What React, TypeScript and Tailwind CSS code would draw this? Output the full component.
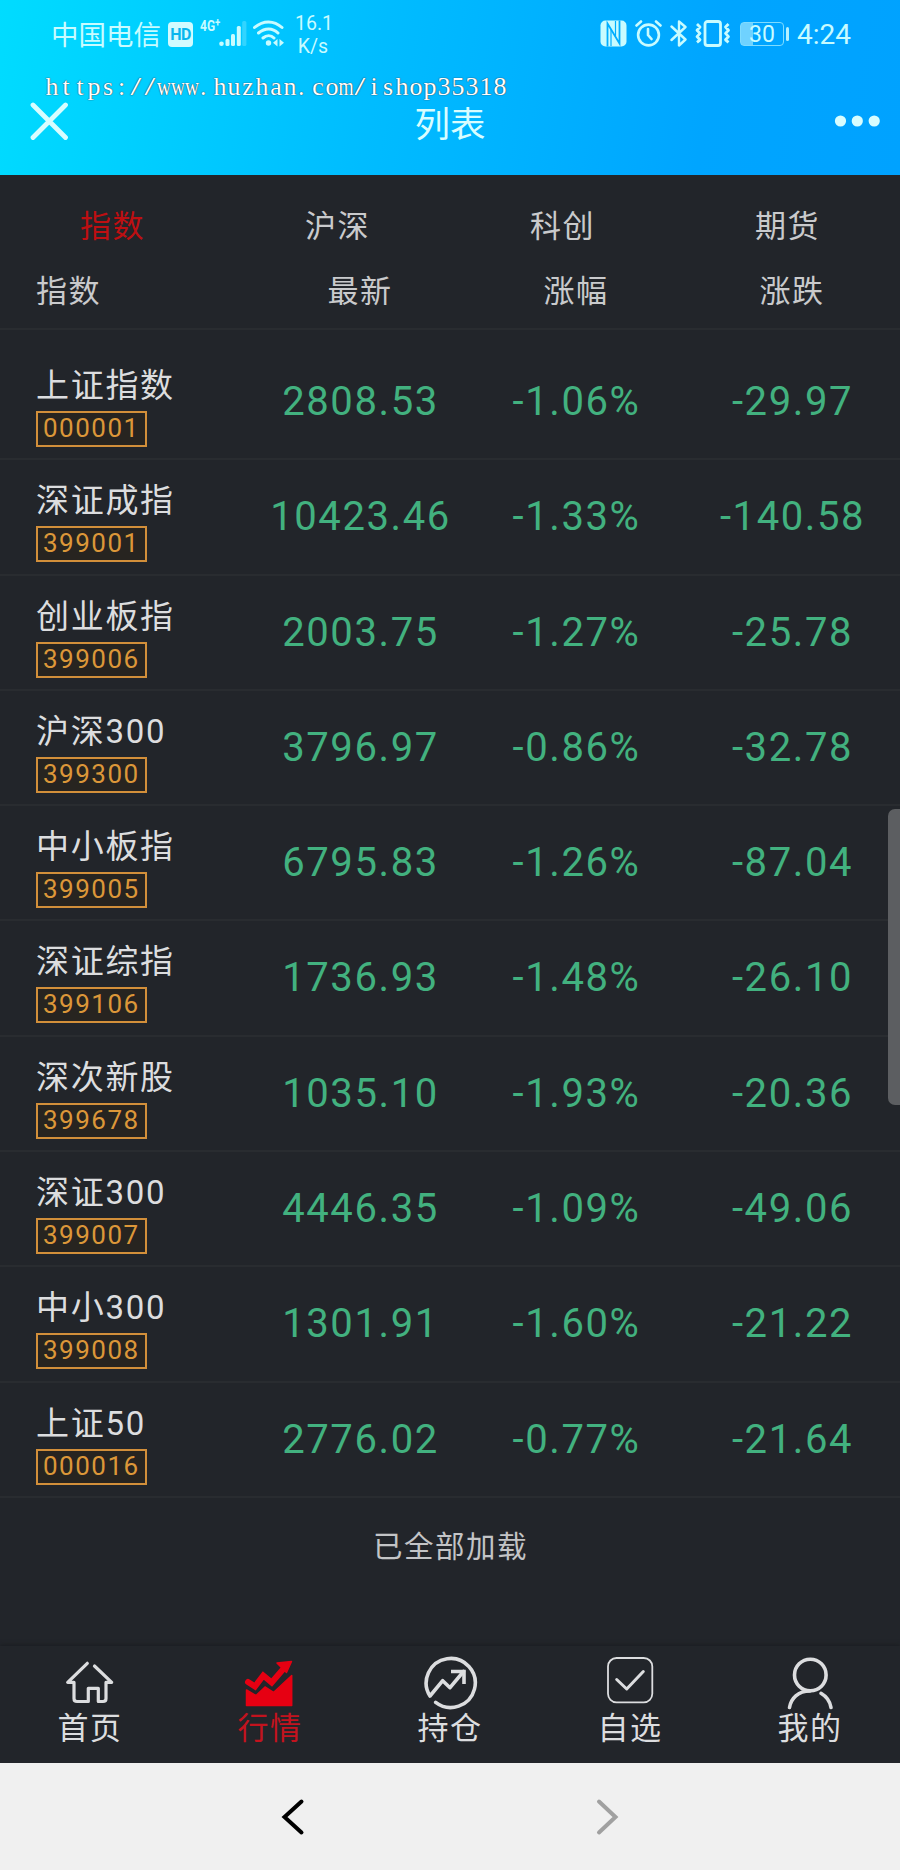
import React from 'react';

interface IndexRow {
  name: string;
  code: string;
  price: string;
  percent: string;
  change: string;
}

const ROWS: IndexRow[] = [
  { name: '上证指数', code: '000001', price: '2808.53', percent: '-1.06%', change: '-29.97' },
  { name: '深证成指', code: '399001', price: '10423.46', percent: '-1.33%', change: '-140.58' },
  { name: '创业板指', code: '399006', price: '2003.75', percent: '-1.27%', change: '-25.78' },
  { name: '沪深300', code: '399300', price: '3796.97', percent: '-0.86%', change: '-32.78' },
  { name: '中小板指', code: '399005', price: '6795.83', percent: '-1.26%', change: '-87.04' },
  { name: '深证综指', code: '399106', price: '1736.93', percent: '-1.48%', change: '-26.10' },
  { name: '深次新股', code: '399678', price: '1035.10', percent: '-1.93%', change: '-20.36' },
  { name: '深证300', code: '399007', price: '4446.35', percent: '-1.09%', change: '-49.06' },
  { name: '中小300', code: '399008', price: '1301.91', percent: '-1.60%', change: '-21.22' },
  { name: '上证50', code: '000016', price: '2776.02', percent: '-0.77%', change: '-21.64' },
];

const TABS = ['指数', '沪深', '科创', '期货'];
const SITE_URL = 'https://www.huzhan.com/ishop35318';

// Wide letters are squeezed into their cell, punctuation sits at its left edge
const cellClass = (char: string) => {
  if (char === 'w' || char === 'm') return 'justify-center scale-x-75';
  if (char === '.') return 'justify-start pl-px';
  if (char === ':') return 'justify-start pl-[3px]';
  if (char === '/') return 'justify-center scale-x-150';
  return 'justify-center';
};

const StatusBar = () => (
  <div className="flex h-[68px] items-start pl-[51px] pr-[49px] pt-[16px] text-[#c8fbff]">
    <span className="mt-[6px] w-[117px] whitespace-nowrap text-[27.5px] leading-[28px]">中国电信</span>
    <span className="mt-[6px] flex h-[25px] w-[25px] items-center justify-center rounded-[4px] bg-[#d2fbff] text-[16px] font-bold leading-none tracking-[-0.5px] text-[#08b6ee]">
      HD
    </span>
    <span className="ml-[7px] mt-[3px] flex w-[19px] origin-left scale-x-80 whitespace-nowrap text-[15px] font-bold leading-[15px]">
      4G<span className="-mt-[3px] text-[12px]">+</span>
    </span>
    {/* Signal strength */}
    <svg className="mt-[4px]" width="30" height="28" viewBox="0 0 30 28" fill="currentColor">
      <circle cx="2.5" cy="23.8" r="2.3" />
      <rect x="6.5" y="19" width="4" height="7" rx="1.5" />
      <rect x="12" y="14" width="4" height="12" rx="1.5" />
      <rect x="17.8" y="6" width="4" height="20" rx="1.5" />
      <rect x="23.2" y="1" width="4.2" height="25" rx="1.5" opacity="0.25" />
    </svg>
    {/* Wifi */}
    <svg className="ml-[4px] mt-[3px]" width="32" height="29" viewBox="0 0 32 29" fill="none" stroke="currentColor" strokeWidth="3" strokeLinecap="round">
      <path d="M1.5 8.5C10 1 21 1 29 8.5M5.5 14C12 8.5 19.5 8.5 25 14M10 19C13.5 16 18 16 21 19" />
      <circle cx="15.5" cy="24" r="2.7" fill="currentColor" stroke="none" />
      <path d="M24.5 20v7.5L20 23.75zM26.5 20v7.5L31 23.75z" fill="currentColor" stroke="none" />
    </svg>
    <span className="-mt-[3px] ml-[10px] flex w-[36px] flex-col text-center text-[19.5px] leading-[22.5px]">
      <span>16.1</span>
      <span>K/s</span>
    </span>
    <div className="ml-auto flex items-start">
      {/* NFC */}
      <svg className="mt-[4px]" width="27" height="27" viewBox="0 0 27 27">
        <rect x="0.5" y="0.5" width="26" height="26" rx="5" fill="currentColor" />
        <path d="M7.5 26.5V3.5L19.5 23.5V0.5" fill="none" stroke="#00aeff" strokeWidth="1.8" />
        <path d="M11 9.5V26M15.5 1V16" fill="none" stroke="#00aeff" strokeWidth="1.2" />
      </svg>
      {/* Alarm */}
      <svg className="ml-[8px] mt-[4px]" width="27" height="27" viewBox="0 0 27 27" fill="none" stroke="currentColor" strokeWidth="2.6" strokeLinecap="round">
        <circle cx="13.5" cy="15" r="10.4" />
        <path d="M13 9v6l3.5 4M1.5 5.5L6 1.5M25.5 5.5L21 1.5" />
      </svg>
      {/* Bluetooth */}
      <svg className="ml-[8px] mt-[4px]" width="18" height="27" viewBox="0 0 18 27" fill="none" stroke="currentColor" strokeWidth="2.4" strokeLinejoin="round" strokeLinecap="round">
        <path d="M1.5 6.5L15.5 19.5L9 25.5V1.5L15.5 7L1.5 20" />
      </svg>
      {/* Vibrate */}
      <svg className="ml-[7px] mt-[4px]" width="36" height="27" viewBox="0 0 36 27" fill="none" stroke="currentColor" strokeWidth="2.8" strokeLinejoin="round">
        <rect x="10" y="1.5" width="15.5" height="24" rx="2.5" />
        <path d="M2 4l3 3-3 3.2 3 3.2-3 3.2 3 3.2-3 2.5M33.5 4l-3 3 3 3.2-3 3.2 3 3.2-3 3.2 3 2.5" />
      </svg>
      {/* Battery */}
      <span className="ml-[9px] mt-[6px] flex h-[24px] w-[44px] items-center justify-center rounded-[4px] border-[1.5px] border-[#7fdcff] bg-linear-to-r from-[#6fd2ff] from-28% to-transparent to-28% text-[23px] leading-none">
        30
      </span>
      <span className="ml-[2px] mt-[11px] h-[14px] w-[3px] rounded-full bg-[#b5f0ff]" />
      <span className="ml-[8px] mt-[4px] whitespace-nowrap text-[28px] leading-[30px]">4:24</span>
    </div>
  </div>
);

const TopBar = () => (
  <header className="relative h-[175px] bg-linear-[100deg,#00dcff_0%,#00bcff_42%,#00a5ff_78%,#00a2ff_100%]">
    <StatusBar />
    <div className="grid grid-cols-[1fr_auto_1fr] items-center pl-[30px] pr-[20px] pt-[33px] text-[#d8fdff]">
      <svg width="50" height="40" viewBox="0 0 50 40" fill="none" stroke="currentColor" strokeWidth="4.8" strokeLinecap="round">
        <path d="M3 4L35.5 36.5M35.5 4L3 36.5" />
      </svg>
      <h1 className="-ml-[10px] pt-[9px] text-[35.5px] leading-[31px]">列表</h1>
      <svg className="justify-self-end" width="50" height="40" viewBox="0 0 50 40" fill="currentColor">
        <circle cx="10.5" cy="20" r="5.6" />
        <circle cx="27.3" cy="20" r="5.6" />
        <circle cx="44.2" cy="20" r="5.6" />
      </svg>
    </div>
    {/* Site address, laid over the bar in fixed-width cells */}
    <div className="absolute left-[45px] top-[73px] flex font-['Liberation_Serif',serif] text-[26px] leading-[28px] text-white [text-shadow:0_0_1px_#345,0_0_1px_#345]">
      {SITE_URL.split('').map((char, i) => (
        <span key={i} className={`flex w-[14px] ${cellClass(char)}`}>
          {char}
        </span>
      ))}
    </div>
  </header>
);

const NavIcon: React.FC<{ children: React.ReactNode }> = ({ children }) => (
  <svg width="60" height="60" viewBox="0 0 60 60" fill="none" stroke="currentColor" strokeWidth="3.6" strokeLinecap="round" strokeLinejoin="round">
    {children}
  </svg>
);

const NAV = [
  {
    label: '首页',
    icon: <path d="M27.3 13.3L7.7 32.3H14V48.5Q14 51.5 17 51.5H28.3V38.3H38.3V51.5H43Q46 51.5 46 48.5V32.3H51.7L34.5 16" strokeWidth="3.2" />,
  },
  {
    label: '行情',
    active: true,
    icon: (
      <>
        <path d="M8 32L15 36.5L23.3 25.5L31.7 32.5L45 17" strokeWidth="6" strokeLinejoin="miter" />
        <path d="M37 13L51.5 11.5L46.5 22.5Z" fill="currentColor" strokeWidth="1.5" />
        <path d="M6.5 40L16 45.5L25 37L33.5 42.5L51.7 25.5V55.5H6.5Z" fill="currentColor" strokeWidth="1.5" />
      </>
    ),
  },
  {
    label: '持仓',
    icon: (
      <>
        <path d="M15.7 52.3A24.5 24.5 0 1 0 10 46L22.7 30.7L30 37.7L43.5 21.5" />
        <path d="M31 21.5H44V34" strokeLinecap="butt" strokeLinejoin="miter" />
      </>
    ),
  },
  {
    label: '自选',
    icon: (
      <>
        <rect x="8" y="8" width="44.3" height="44.3" rx="8.5" strokeWidth="1.8" />
        <path d="M16.7 29.5L26.7 39L43.3 21.5" strokeWidth="3" />
      </>
    ),
  },
  {
    label: '我的',
    icon: (
      <>
        <circle cx="30.3" cy="25" r="15.8" />
        <path d="M9.5 57.5C11 48.5 18 41 30 41M41 43.3C46.5 46.5 50 51.5 51 57.5" />
      </>
    ),
  },
];

export default function App() {
  return (
    <div className="relative flex h-[1870px] w-[900px] flex-col overflow-hidden bg-[#22252a] font-[Roboto,'Noto_Sans_CJK_SC',sans-serif] text-[#dcdddf]">
      <TopBar />

      {/* Market tabs and column titles */}
      <div className="h-[155px] border-b-2 border-[#292c30] pt-[18px] text-[31px] leading-[66px] tracking-[1.5px] text-[#c9cacc]">
        <div className="grid grid-cols-4 pt-px text-center leading-[65px]">
          {TABS.map((tab, i) => (
            <span key={tab} className={i === 0 ? 'text-[#bd0f12]' : ''}>
              {tab}
            </span>
          ))}
        </div>
        <div className="grid grid-cols-[216px_216px_216px_216px] pl-[36px] text-center">
          <span className="text-left">指数</span>
          <span>最新</span>
          <span>涨幅</span>
          <span>涨跌</span>
        </div>
      </div>

      <main className="pt-[15px]">
        {ROWS.map((row) => (
          <div
            key={row.code}
            className="grid h-[115.3px] grid-cols-[216px_216px_216px_216px] border-b-2 border-[#292c30] pl-[36px] text-center text-[40px] leading-[113px] tracking-[1.6px] text-[#42b17f]"
          >
            <div className="flex flex-col items-start pt-[24px] text-[#dcdddf]">
              <span className="whitespace-nowrap text-[33px] leading-[34px] tracking-[1.7px]">{row.name}</span>
              <span className="mt-[8px] h-[36px] w-[111px] border-2 border-[#d28f3a] bg-[#272420] pl-[5px] text-left text-[26px] leading-[30px] tracking-[1.5px] text-[#dc9739]">
                {row.code}
              </span>
            </div>
            <span className="pl-px">{row.price}</span>
            <span className="pl-px">{row.percent}</span>
            <span className="pl-px">{row.change}</span>
          </div>
        ))}
      </main>

      <p className="pl-px pt-[29px] text-center text-[29.5px] leading-[40px] tracking-[1.5px] text-[#c3c4c6]">已全部加载</p>

      <nav className="mt-auto grid h-[117px] grid-cols-5 shadow-[0_-1px_4px_#1a1c20]">
        {NAV.map((item) => (
          <div key={item.label} className={`flex flex-col items-center pt-[4px] ${item.active ? 'text-[#e60012]' : 'text-[#dcdddf]'}`}>
            <NavIcon>{item.icon}</NavIcon>
            <span className={`pt-px text-[31px] leading-[36px] tracking-[1.5px] ${item.active ? 'text-[#c3131e]' : ''}`}>{item.label}</span>
          </div>
        ))}
      </nav>

      {/* Browser back / forward */}
      <footer className="flex h-[107px] shrink-0 items-center justify-between bg-[#f0f0f0] px-[280px]">
        <svg width="26" height="40" viewBox="0 0 26 40" fill="none" stroke="#000" strokeWidth="4" strokeLinecap="round">
          <path d="M21.5 4.5L4.5 20L21.5 35.5" />
        </svg>
        <svg width="26" height="40" viewBox="0 0 26 40" fill="none" stroke="#a0a0a0" strokeWidth="4" strokeLinecap="round">
          <path d="M5 4.5L21.5 20L5 35.5" />
        </svg>
      </footer>

      {/* Scroll thumb */}
      <div className="absolute right-0 top-[809px] h-[296px] w-[12px] rounded-l-[7px] bg-[#5c5e61]" />
    </div>
  );
}
